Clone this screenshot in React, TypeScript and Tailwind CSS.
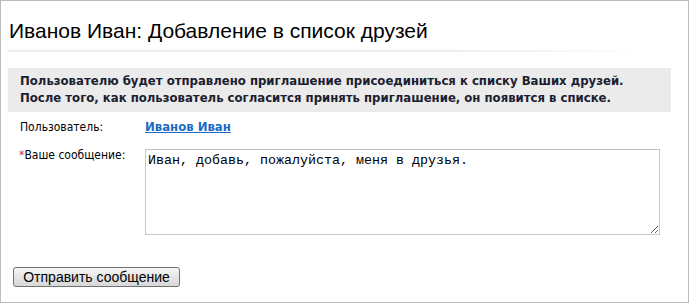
import React from 'react';

const AddFriend: React.FC = () => {
  return (
    <div className="w-[689px] h-[303px] border border-[#bdbdbd] bg-white px-[7px] flex flex-col">
      <h1 className="mt-[18px] pl-[1px] text-[21px] leading-[24px] text-black font-['Liberation_Sans',Arial,sans-serif]">
        Иванов Иван: Добавление в список друзей
      </h1>
      <div className="mt-[7px] h-[2px] w-[645px] bg-[linear-gradient(to_right,#eeeeee_70%,rgba(238,238,238,0))]" />

      <div className="mt-[16px] w-[663px] h-[44px] bg-[#ebebeb] px-[12px] pb-[3px] flex flex-col justify-center text-[13px] leading-[17px] font-bold text-[#1a2030] font-['DejaVu_Sans_Condensed','DejaVu_Sans',sans-serif]">
        <p>Пользователю будет отправлено приглашение присоединиться к списку Ваших друзей.</p>
        <p>После того, как пользователь согласится принять приглашение, он появится в списке.</p>
      </div>

      <div className="font-['DejaVu_Sans_Condensed','DejaVu_Sans',sans-serif] text-[12px] leading-[16px] text-black">
        <div className="mt-[7px] flex pl-[12px]">
          <span className="w-[125px]">Пользователь:</span>
          <a href="#" className="font-bold text-[13px] text-[#1b6bc6] underline">
            Иванов Иван
          </a>
        </div>

        <div className="mt-[12px] flex items-start pl-[11px]">
          <span className="w-[126px]">
            <span className="text-[#e8312f]">*</span>Ваше сообщение:
          </span>
          <textarea
            defaultValue="Иван, добавь, пожалуйста, меня в друзья."
            className="mt-[2px] w-[515px] h-[86px] border border-[#c9c9c9] border-t-[#bfbfbf] px-[2px] pt-[3px] text-[13.33px] leading-[15px] text-black font-['Liberation_Mono','Courier_New',monospace] outline-none"
          />
        </div>
      </div>

      <div className="mt-[29px] pl-[5px]">
        <button className="h-[20px] w-[167px] rounded-[3px] border border-[#707070] bg-[linear-gradient(to_bottom,#f7f7f7,#e4e4e4_50%,#d8d8d8)] text-[14px] leading-[18px] text-black font-['Liberation_Sans',Arial,sans-serif]">
          Отправить сообщение
        </button>
      </div>
    </div>
  );
};

export default function App() {
  return <AddFriend />;
}
